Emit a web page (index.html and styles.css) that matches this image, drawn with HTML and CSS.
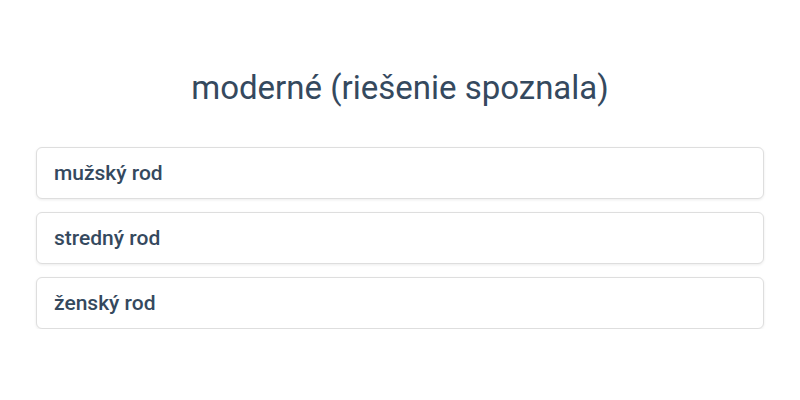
FILE: index.html
```html
<!doctype html>
<html lang="sk">
<head>
    <meta charset="UTF-8">
    <title>Rod</title>
    <link rel="stylesheet" href="styles.css">
</head>
<body>
<div class="quiz">
    <h1 class="question">moderné (riešenie spoznala)</h1>
    <ul class="answers">
        <li class="answer">mužský rod</li>
        <li class="answer">stredný rod</li>
        <li class="answer">ženský rod</li>
    </ul>
</div>
</body>
</html>
```

FILE: styles.css
```css
*{
    margin: 0;
    padding: 0;
    box-sizing: border-box;
}
body{
    background: #fff;
    font-family: Roboto, "Liberation Sans", sans-serif;
    color: #35495e;
}
.quiz{
    padding: 69px 36px 0;
}
.question{
    font-size: 33px;
    font-weight: 400;
    line-height: 38px;
    text-align: center;
    margin-bottom: 40px;
}
.answers{
    list-style: none;
    display: flex;
    flex-direction: column;
    gap: 13px;
}
.answer{
    height: 52px;
    line-height: 50px;
    padding: 0 17px;
    border: 1px solid #dedede;
    border-radius: 6px;
    box-shadow: 0 1px 3px rgba(0,0,0,0.08);
    font-size: 21px;
    font-weight: 500;
    background: #fff;
}
```
